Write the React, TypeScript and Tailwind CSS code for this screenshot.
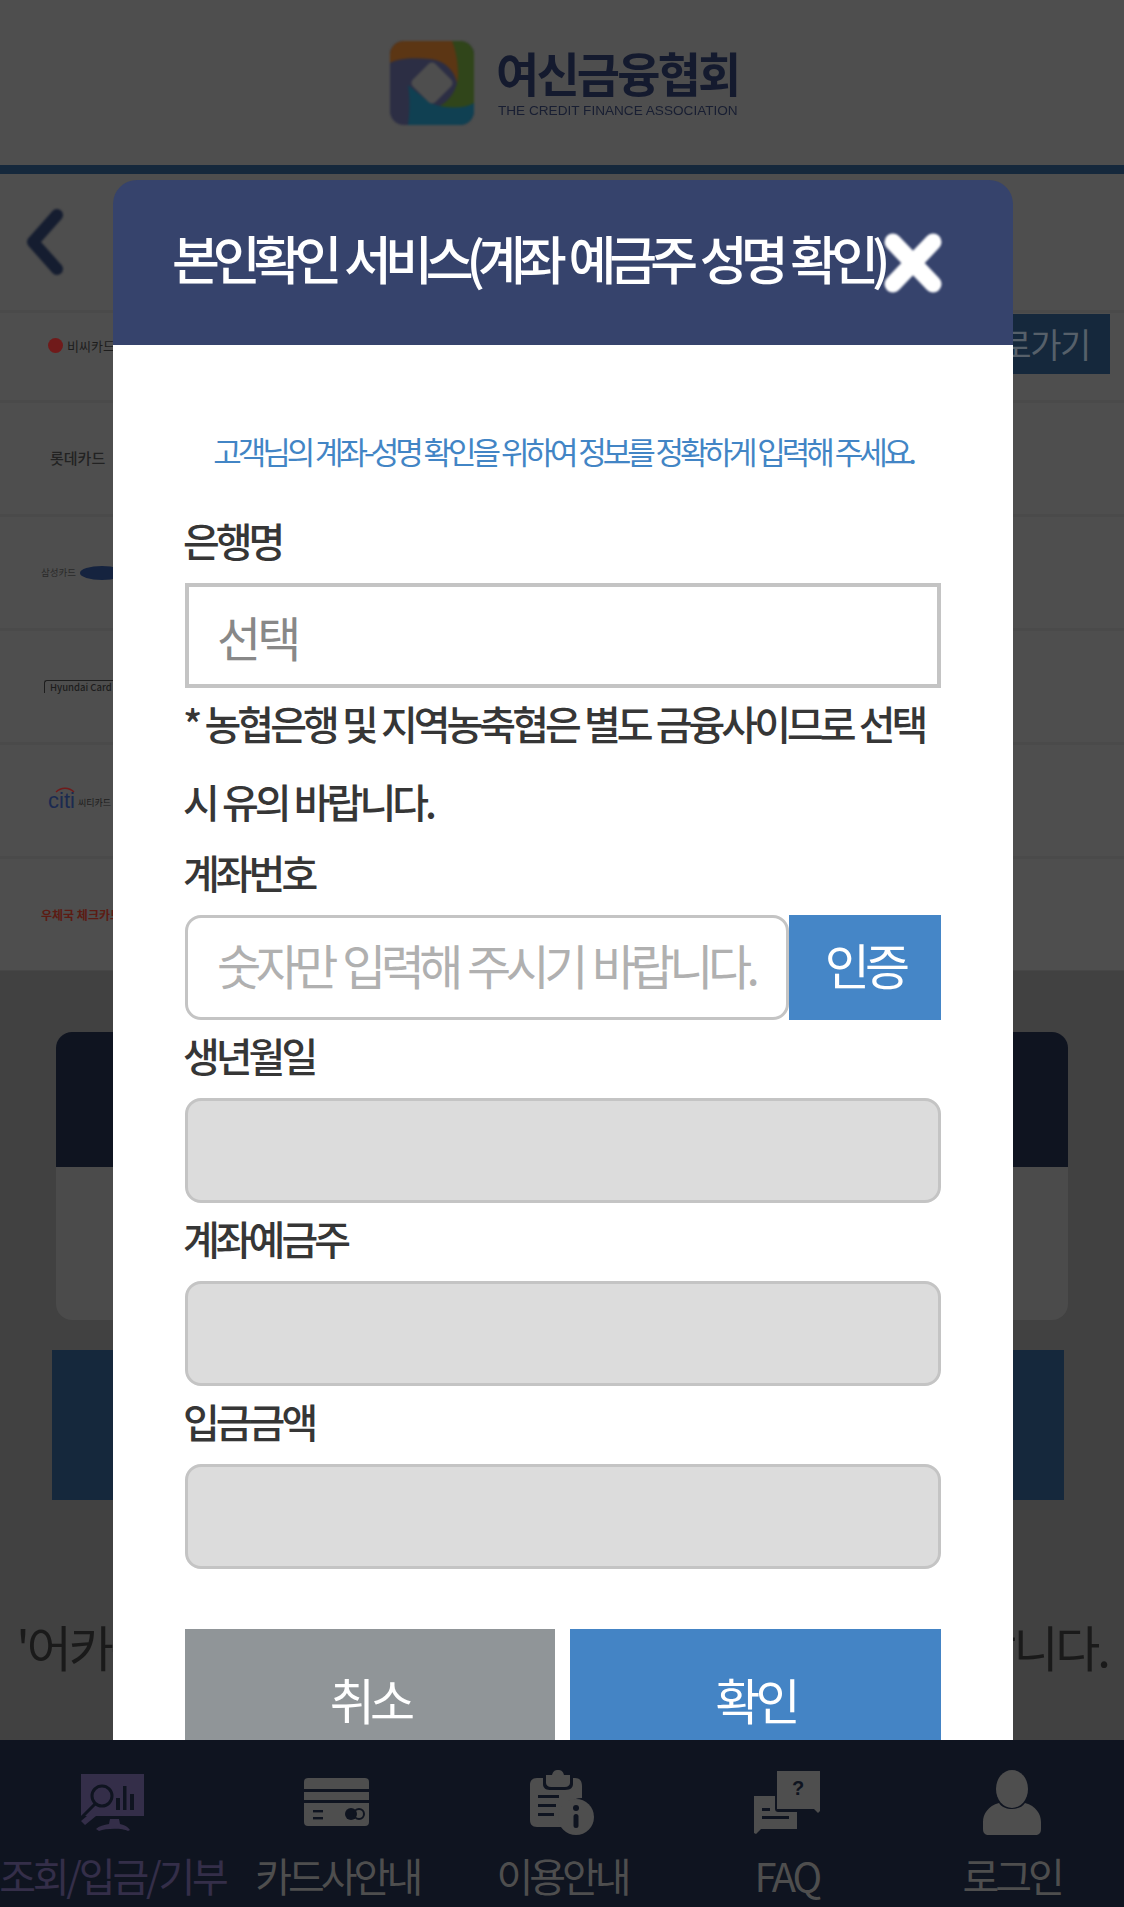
const F = "[font-family:'Noto_Sans_CJK_KR','Noto_Sans',sans-serif]";
const NAVY = "#0f1420";
const DIM = "#4e4e4e";

function Chevron() {
  return (
    <svg width="44" height="66" viewBox="0 0 44 66" className="blur-[0.8px]">
      <path d="M34 6 L10 33 L34 60" fill="none" stroke="#151d30" strokeWidth="12" strokeLinecap="round" strokeLinejoin="round" />
    </svg>
  );
}

function LogoMark() {
  return (
    <svg width="84" height="84" viewBox="0 0 84 84" className="blur-[0.8px] shrink-0">
      <defs>
        <clipPath id="lm"><rect width="84" height="84" rx="14" /></clipPath>
      </defs>
      <g clipPath="url(#lm)">
        <rect width="84" height="84" fill="#2c2e44" />
        <path d="M0 0H68V50C68 34 58 20 40 18C22 16 6 18 0 22Z" fill="#5c3614" />
        <path d="M62 0H84V64C78 68 66 70 48 66C60 60 68 48 68 34C68 22 66 10 62 0Z" fill="#30451a" />
        <path d="M18 44L40 62C56 68 74 68 84 62V84H18C20 70 20 56 18 44Z" fill="#104052" />
        <rect x="26" y="26" width="32" height="32" rx="5" transform="rotate(45 42 42)" fill={DIM} />
      </g>
    </svg>
  );
}

function IconBoard() {
  return (
    <svg width="66" height="58" viewBox="0 0 66 58">
      <path d="M2 0H65V42H17L6 51L2 47L8 42H2Z" fill="#342e49" />
      <circle cx="23" cy="22" r="10" fill="none" stroke={NAVY} strokeWidth="3" />
      <path d="M16 30L3 43" stroke={NAVY} strokeWidth="3" />
      <rect x="37" y="24" width="4" height="12" fill={NAVY} />
      <rect x="44" y="12" width="3.5" height="24" fill={NAVY} />
      <rect x="51" y="20" width="4" height="16" fill={NAVY} />
      <path d="M31 45H40L41 50C46 51 49 53 51 56L49 57C44 54 27 54 20 57L17 55C20 52 25 51 30 50Z" fill="#342e49" />
    </svg>
  );
}

function IconCard() {
  return (
    <svg width="66" height="50" viewBox="0 0 66 50">
      <path d="M4 0H61Q65 0 65 4V11H0V4Q0 0 4 0Z" fill={DIM} />
      <rect y="14" width="65" height="8" fill={DIM} />
      <path d="M0 25H65V44Q65 48 61 48H4Q0 48 0 44Z" fill={DIM} />
      <rect x="9" y="32" width="10" height="2.4" fill={NAVY} />
      <rect x="9" y="39" width="10" height="2.4" fill={NAVY} />
      <circle cx="47" cy="36" r="6" fill={NAVY} />
      <circle cx="55" cy="36" r="5" fill="none" stroke={NAVY} strokeWidth="2" />
    </svg>
  );
}

function IconClip() {
  return (
    <svg width="66" height="66" viewBox="0 0 66 66">
      <path d="M8 8H14V14C14 19 18 20 22 20H36C42 20 44 17 44 14V8H46C51 8 53 11 53 16V28C43 28 34 35 32 46V57H8C3 57 1 54 1 50V15C1 11 3 8 8 8Z" fill={DIM} />
      <path d="M17 5H23C24 1 26 0 29 0C32 0 34 1 35 5H41V13C41 15 39 17 36 17H22C19 17 17 15 17 13Z" fill={DIM} />
      <rect x="9" y="25" width="21" height="3" fill={NAVY} />
      <rect x="9" y="34" width="18" height="3" fill={NAVY} />
      <rect x="9" y="43" width="16" height="3" fill={NAVY} />
      <circle cx="47" cy="47" r="18" fill={DIM} />
      <circle cx="47" cy="38" r="3" fill={NAVY} />
      <rect x="44.5" y="44" width="5" height="14" rx="2.5" fill={NAVY} />
    </svg>
  );
}

function IconFaq() {
  return (
    <svg width="66" height="64" viewBox="0 0 66 64">
      <path d="M23 0H66V40L64 42L60 38H23Z" fill={DIM} />
      <path d="M0 25H21V37C21 40 22 41 25 41H43V58H7L2 63L0 62Z" fill={DIM} />
      <rect x="8" y="37" width="8" height="3" fill={NAVY} />
      <rect x="8" y="45" width="27" height="3" fill={NAVY} />
      <text x="44" y="24" textAnchor="middle" fontSize="20" fontWeight="700" fill={NAVY} fontFamily="'Liberation Sans',sans-serif">?</text>
    </svg>
  );
}

function IconUser() {
  return (
    <svg width="60" height="66" viewBox="0 0 60 66">
      <ellipse cx="30" cy="19" rx="16" ry="19" fill={DIM} />
      <path d="M17 33C22 41 38 41 43 33C54 36 59 44 59 52V59C59 63 57 65 53 65H7C3 65 1 63 1 59V52C1 44 6 36 17 33Z" fill={DIM} />
    </svg>
  );
}

function BgRow({ h, children }: { h: string; children: React.ReactNode }) {
  return (
    <div className={`${h} border-t-[3px] border-[#4a4a4a] flex items-center justify-between pr-[14px]`}>
      {children}
    </div>
  );
}

function Label({ children }: { children: React.ReactNode }) {
  return <div className="h-[78px] leading-[70px] -ml-[2px] text-[40px] font-medium tracking-[-0.1em] text-[#363636]">{children}</div>;
}

function Disabled() {
  return <div className="h-[105px] rounded-[16px] border-[3px] border-[#c4c4c4] bg-[#dcdcdc]" />;
}

const NAV = [
  { icon: <IconBoard />, label: "조회/입금/기부", color: "text-[#342e49] tracking-[-0.08em]" },
  { icon: <IconCard />, label: "카드사안내", color: "text-[#4e4e4e] tracking-[-0.1em]" },
  { icon: <IconClip />, label: "이용안내", color: "text-[#4e4e4e] tracking-[-0.1em]" },
  { icon: <IconFaq />, label: "FAQ", color: "text-[#4e4e4e] tracking-[-0.08em]" },
  { icon: <IconUser />, label: "로그인", color: "text-[#4e4e4e] tracking-[-0.1em]" },
];

export default function App() {
  return (
    <div className={`relative w-[1124px] h-[1907px] overflow-hidden bg-[#414141] ${F}`}>
      {/* Dimmed page */}
      <div className="bg-[#4e4e4e]">
        <header className="h-[165px] flex items-center justify-center gap-[22px] pl-[2px]">
          <LogoMark />
          <div className="w-[240px] blur-[0.7px]">
            <div className="text-[47px] leading-[50px] font-bold tracking-[-0.06em] text-[#141a2e] whitespace-nowrap">여신금융협회</div>
            <div className="text-[13.6px] leading-[14px] mt-[7px] ml-[2px] font-['Liberation_Sans'] text-[#181e32] whitespace-nowrap">THE CREDIT FINANCE ASSOCIATION</div>
          </div>
        </header>
        <div className="h-[9px] bg-[#15283c]" />
        <div className="h-[136px] flex items-center pl-[23px] pb-[1px]">
          <Chevron />
        </div>
        <BgRow h="h-[90px]">
          <div className="flex items-center gap-[4px] pl-[48px] pb-[22px]">
            <span className="w-[15px] h-[15px] rounded-full bg-[#701a1a]" />
            <span className="text-[13px] text-[#1d1d1d] whitespace-nowrap">비씨카드</span>
          </div>
          <div className="w-[190px] h-[60px] mb-[26px] bg-[#15283c] text-[#56606a] text-[34px] flex items-center justify-end pr-[20px] tracking-[-0.04em]">바로가기</div>
        </BgRow>
        <BgRow h="h-[114px]">
          <span className="pl-[50px] text-[15px] font-medium text-[#222] whitespace-nowrap">롯데카드</span>
        </BgRow>
        <BgRow h="h-[114px]">
          <div className="flex items-center gap-[4px] pl-[41px]">
            <span className="text-[9.5px] text-[#2a2a2a] whitespace-nowrap">삼성카드</span>
            <span className="w-[44px] h-[14px] rounded-[50%] bg-[#15233f]" />
          </div>
        </BgRow>
        <BgRow h="h-[114px]">
          <div className="ml-[44px] pl-[5px] pr-[20px] h-[13px] border-l border-t border-[#1d1d1d] rounded-tl-[3px] flex items-center">
            <span className="text-[9.5px] font-medium text-[#1d1d1d] whitespace-nowrap">Hyundai Card</span>
          </div>
        </BgRow>
        <BgRow h="h-[114px]">
          <div className="flex items-end gap-[3px] pl-[48px]">
            <span className="relative text-[22px] leading-[18px] font-['Liberation_Sans'] text-[#1b2a50]">
              citi
              <svg width="20" height="6" viewBox="0 0 20 6" className="absolute left-[7px] -top-[5px]">
                <path d="M1 5C6 0 14 0 19 5" fill="none" stroke="#701a1a" strokeWidth="1.3" />
              </svg>
            </span>
            <span className="text-[9px] text-[#1d1d1d] whitespace-nowrap">씨티카드</span>
          </div>
        </BgRow>
        <BgRow h="h-[114px]">
          <span className="pl-[41px] text-[12px] font-bold text-[#5c1b13] whitespace-nowrap">우체국 체크카드</span>
        </BgRow>
      </div>
      <div className="border-t-[1px] border-[#464646] h-[936px] pt-[61px] px-[56px]">
        <div className="h-[288px] rounded-[16px] bg-[#4b4b4b] overflow-hidden">
          <div className="h-[135px] bg-[#0f1420]" />
        </div>
        <div className="-ml-[4px] mt-[30px] h-[150px] w-[1012px] bg-[#15283c]" />
        <div className="-mx-[40px] mt-[116px] h-[60px] leading-[60px] text-center text-[49px] tracking-[-0.065em] text-[#1a1a1a] whitespace-nowrap">
          '어카운트 조회' 서비스 이용을 위해 본인 확인이 필요합니다.
        </div>
      </div>

      {/* Dialog */}
      <div className="absolute left-[113px] top-[180px] w-[900px]">
        <div className="h-[165px] rounded-t-[24px] bg-[#36436c] flex items-center pl-[59px]">
          <h2 className="mb-[9px] text-[52px] font-medium tracking-[-0.135em] [word-spacing:0.08em] text-white whitespace-nowrap">본인확인 서비스(계좌 예금주 성명 확인)</h2>
          <svg width="60" height="60" viewBox="0 0 60 60" className="blur-[0.8px] shrink-0">
            <path d="M10 9 L50 51 M50 9 L10 51" stroke="#fff" strokeWidth="17" strokeLinecap="round" />
          </svg>
        </div>
        <div className="bg-white px-[72px] pb-[40px]">
          <p className="pt-[54px] h-[160px] leading-[104px] text-center text-[31px] tracking-[-0.13em] [word-spacing:0.03em] text-[#4285c5] whitespace-nowrap">고객님의 계좌-성명 확인을 위하여 정보를 정확하게 입력해 주세요.</p>
          <Label>은행명</Label>
          <div className="h-[105px] border-[4px] border-[#c4c4c4] flex items-center pl-[28px] text-[48px] tracking-[-0.08em] text-[#888]">선택</div>
          <p className="-mt-[4px] -ml-[2px] -mb-[3px] text-[40px] leading-[78px] font-medium tracking-[-0.1em] [word-spacing:0.03em] text-[#363636]">* 농협은행 및 지역농축협은 별도 금융사이므로 선택 시 유의 바랍니다.</p>
          <Label>계좌번호</Label>
          <div className="flex h-[105px]">
            <div className="w-[604px] rounded-[16px] border-[3px] border-[#c4c4c4] flex items-center pl-[29px] pb-[8px] text-[48px] tracking-[-0.115em] [word-spacing:0.08em] text-[#b0b0b0] whitespace-nowrap overflow-hidden">숫자만 입력해 주시기 바랍니다.</div>
            <button className="flex-1 pb-[8px] bg-[#4586c7] text-white text-[49px] tracking-[-0.1em]">인증</button>
          </div>
          <Label>생년월일</Label>
          <Disabled />
          <Label>계좌예금주</Label>
          <Disabled />
          <Label>입금금액</Label>
          <Disabled />
          <div className="mt-[60px] flex gap-[15px]">
            <button className="w-[370px] h-[142px] pb-[2px] bg-[#909598] text-white text-[49px] tracking-[-0.1em]">취소</button>
            <button className="flex-1 h-[142px] pb-[2px] bg-[#4484c5] text-white text-[49px] tracking-[-0.1em]">확인</button>
          </div>
        </div>
      </div>

      {/* Bottom nav */}
      <nav className="absolute left-0 right-0 bottom-0 h-[167px] bg-[#0f1420] grid grid-cols-5">
        {NAV.map((n) => (
          <div key={n.label} className="relative flex flex-col items-center">
            <div className="h-[108px] flex items-center pt-[17px]">{n.icon}</div>
            <span className={`text-[40px] leading-[54px] whitespace-nowrap ${n.color}`}>{n.label}</span>
          </div>
        ))}
      </nav>
    </div>
  );
}
